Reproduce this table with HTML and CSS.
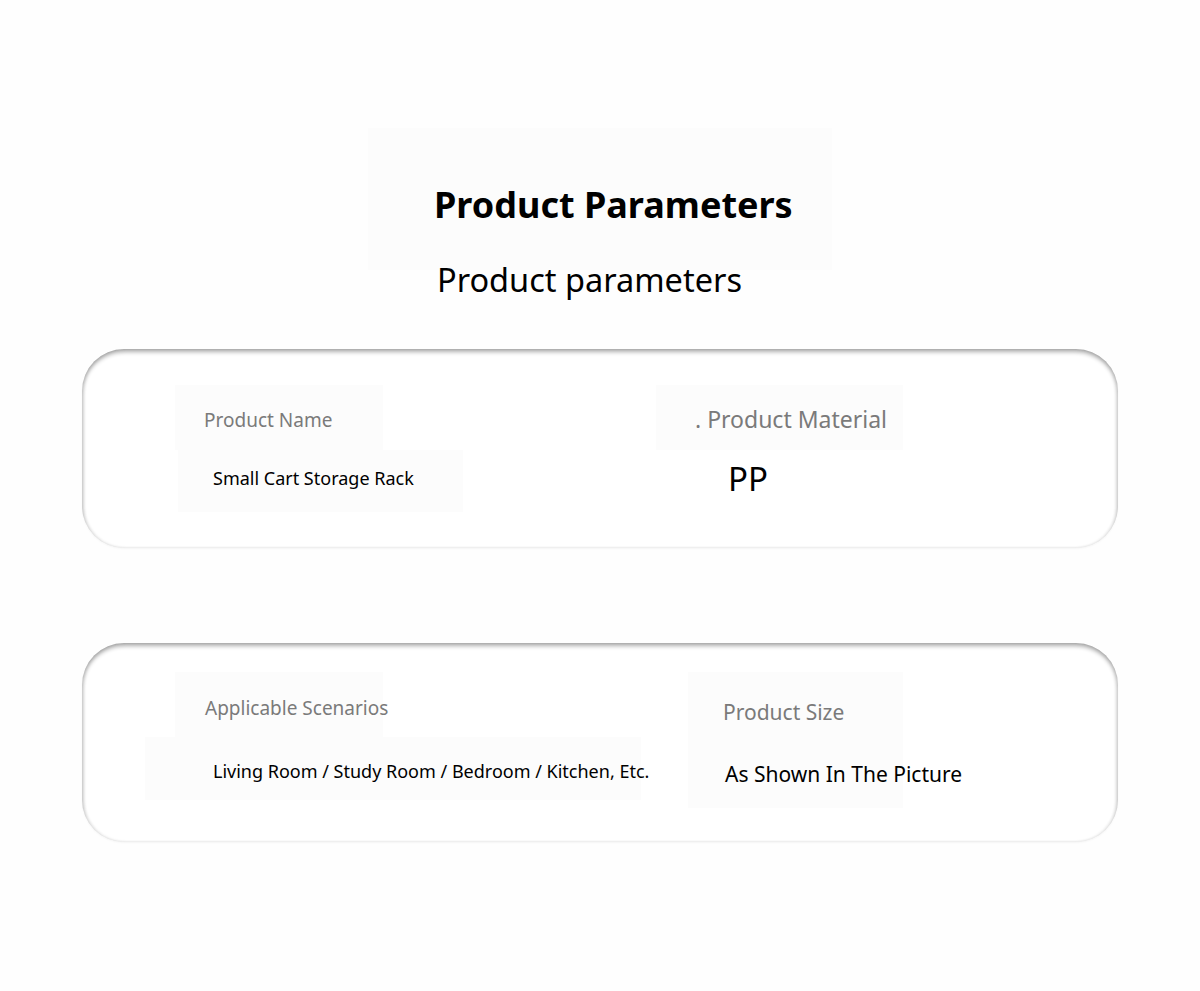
FILE: index.html
```html
<!DOCTYPE html>
<html lang="en">
<head>
<meta charset="utf-8">
<title>Product Parameters</title>
<link rel="stylesheet" href="styles.css">
</head>
<body>
<main class="page">
  <header class="head">
    <div class="head-box">
      <h1 class="title">Product Parameters</h1>
    </div>
    <p class="subtitle">Product parameters</p>
  </header>

  <section class="card card-a">
    <div class="cell cell-name">
      <div class="label">Product Name</div>
      <div class="value">Small Cart Storage Rack</div>
    </div>
    <div class="cell cell-material">
      <div class="label">. Product Material</div>
      <div class="value">PP</div>
    </div>
  </section>

  <section class="card card-b">
    <div class="cell cell-scen">
      <div class="label">Applicable Scenarios</div>
      <div class="value">Living Room / Study Room / Bedroom / Kitchen, Etc.</div>
    </div>
    <div class="cell cell-size">
      <div class="label">Product Size</div>
      <div class="value">As Shown In The Picture</div>
    </div>
  </section>
</main>
</body>
</html>
```

FILE: styles.css
```css
html, body {
  margin: 0;
  padding: 0;
  background: #fefefe;
}
body {
  font-family: "Noto Sans", "Open Sans", "DejaVu Sans", sans-serif;
  color: #000;
  width: 1200px;
  height: 991px;
  overflow: hidden;
}
.page {
  display: flex;
  flex-direction: column;
  padding-top: 128px;
}
.head {
  display: flex;
  flex-direction: column;
}
.head-box {
  margin-left: 368px;
  width: 464px;
  height: 142px;
  background: #fcfcfc;
  display: flex;
  align-items: flex-start;
}
.title {
  margin: 54px 0 0 66px;
  font-size: 36px;
  font-weight: 700;
  line-height: 46px;
  letter-spacing: 0;
  white-space: nowrap;
}
.subtitle {
  margin: -13px 0 0 437px;
  font-size: 32.5px;
  line-height: 46px;
  font-weight: 400;
  white-space: nowrap;
}
.card {
  margin-left: 82px;
  width: 1036px;
  height: 199px;
  box-sizing: border-box;
  border-radius: 42px;
  background: #fff;
  box-shadow: inset 0 3px 4px rgba(0,0,0,0.32), inset 2px 0 3px rgba(0,0,0,0.08), inset -2px 0 3px rgba(0,0,0,0.06), 0 1px 2px rgba(0,0,0,0.04);
  display: flex;
}
.card-a { margin-top: 46px; }
.card-b { margin-top: 95px; }
.cell {
  display: flex;
  flex-direction: column;
  white-space: nowrap;
}
.label {
  color: #7a7a7a;
  background: #fcfcfc;
}
.value {
  background: #fcfcfc;
}
/* card A */
.cell-name { margin: 36px 0 0 93px; width: 288px; }
.cell-name .label { width: 208px; box-sizing: border-box; padding: 20px 0 0 29px; height: 65px; font-size: 19px; line-height: 30px; }
.cell-name .value { width: 285px; box-sizing: border-box; padding: 13px 0 0 35px; height: 62px; font-size: 18px; line-height: 30px; margin-left: 3px; }
.cell-material { margin: 36px 0 0 193px; width: 247px; }
.cell-material .label { box-sizing: border-box; padding: 19px 0 0 39px; height: 65px; font-size: 23px; line-height: 30px; }
.cell-material .value { background: transparent; padding: 9px 0 0 72px; font-size: 33px; line-height: 40px; }
/* card B */
.cell-scen { margin: 29px 0 0 63px; width: 496px; }
.cell-scen .label { width: 208px; margin-left: 30px; box-sizing: border-box; padding: 21px 0 0 30px; height: 65px; font-size: 19px; line-height: 30px; }
.cell-scen .value { width: 496px; box-sizing: border-box; padding: 19px 0 0 68px; height: 63px; font-size: 18px; line-height: 30px; }
.cell-size { margin: 29px 0 0 47px; width: 215px; height: 136px; background: #fcfcfc; }
.cell-size .label { background: transparent; padding: 25px 0 0 35px; font-size: 21px; line-height: 30px; }
.cell-size .value { background: transparent; padding: 31px 0 0 37px; font-size: 21px; line-height: 32px; }
```
